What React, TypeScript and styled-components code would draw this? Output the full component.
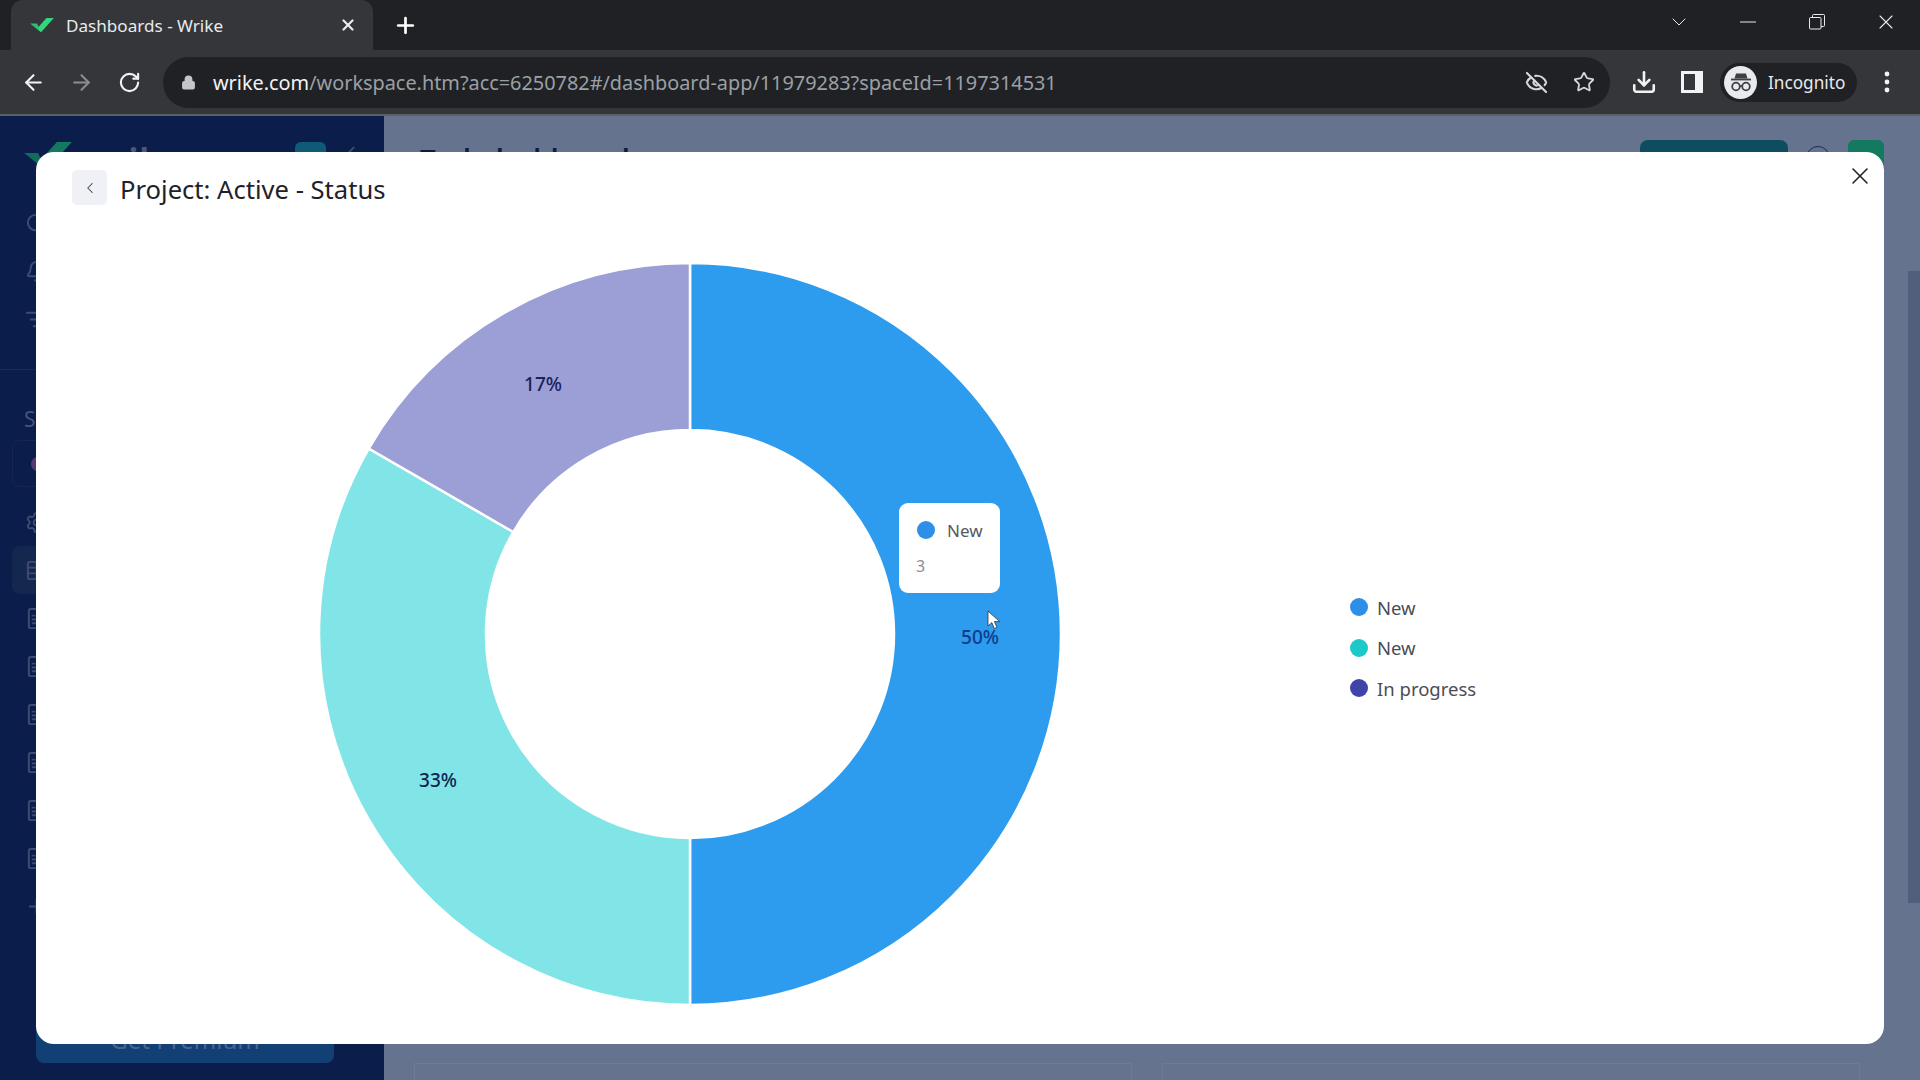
import styled, { createGlobalStyle } from "styled-components";
import {
  ArrowLeft,
  ArrowRight,
  Bell,
  ChevronDown,
  ChevronLeft,
  Download,
  EyeOff,
  FileText,
  ListFilter,
  Lock,
  Minus,
  Plus,
  RotateCw,
  Search,
  Settings,
  Star,
  Table,
  X,
} from "lucide-react";

const GlobalStyle = createGlobalStyle`
  html, body {
    margin: 0;
    padding: 0;
    width: 1920px;
    height: 1080px;
    overflow: hidden;
    background: #0b1d4b;
    font-family: "Noto Sans", "Open Sans", Arial, sans-serif;
  }
  * { box-sizing: border-box; }
`;

// Browser chrome
const Page = styled.div`
  position: relative;
  width: 1920px;
  height: 1080px;
  display: flex;
  flex-direction: column;
`;

const TabStrip = styled.div`
  height: 50px;
  background: #202124;
  display: flex;
  align-items: flex-end;
  padding-left: 11px;
  color: #fff;
`;

const Tab = styled.div`
  width: 362px;
  height: 50px;
  background: #35363a;
  border-radius: 12px 12px 0 0;
  display: flex;
  align-items: center;
  padding: 0 16px 0 19px;
  font-size: 17.1px;
  color: #e8eaed;
`;

const TabTitle = styled.span`
  margin-left: 12px;
  flex: 1;
`;

const NewTab = styled.div`
  width: 64px;
  height: 50px;
  display: flex;
  align-items: center;
  justify-content: center;
`;

const WindowControls = styled.div`
  margin-left: auto;
  display: flex;
  height: 50px;
`;

const WindowButton = styled.div`
  width: 69px;
  height: 44px;
  display: flex;
  align-items: center;
  justify-content: center;
  color: #e8eaed;
`;

const Toolbar = styled.div`
  height: 66px;
  background: #35363a;
  border-bottom: 2px solid #5c5f64;
  display: flex;
  align-items: center;
  padding-left: 9px;
  color: #e8eaed;
`;

const ToolButton = styled.div<{ $dim?: boolean }>`
  width: 48px;
  height: 48px;
  flex: none;
  display: flex;
  align-items: center;
  justify-content: center;
  color: ${(p) => (p.$dim ? "#8b8d91" : "#f1f3f4")};
`;

const Omnibox = styled.div`
  width: 1447px;
  height: 51px;
  margin: 0 10px;
  background: #202124;
  border-radius: 26px;
  display: flex;
  align-items: center;
  padding: 0 2px 0 18px;
  font-size: 19.87px;
`;

const UrlText = styled.div`
  margin-left: 17px;
  flex: 1;
  color: #9aa0a6;
  white-space: nowrap;
`;

const UrlHost = styled.span`
  color: #f1f3f4;
`;

const OmniIcon = styled.div`
  width: 48px;
  display: flex;
  justify-content: center;
  color: #d5d7da;
`;

const ProfilePill = styled.div`
  width: 137px;
  height: 39px;
  margin-left: 4px;
  background: #202124;
  border-radius: 20px;
  display: flex;
  align-items: center;
  font-size: 17.2px;
  color: #e8eaed;
`;

const Avatar = styled.div`
  width: 33px;
  height: 33px;
  margin-left: 4px;
  border-radius: 50%;
  background: #e8eaed;
  display: flex;
  align-items: center;
  justify-content: center;
`;

const ProfileName = styled.span`
  margin-left: 11px;
`;

const MoreDots = styled(ToolButton)`
  margin-left: 6px;
`;

// App behind the dialog
const Workspace = styled.div`
  flex: 1;
  display: flex;
  min-height: 0;
`;

const Sidebar = styled.aside`
  width: 384px;
  background: #0b1d4b;
  display: flex;
  flex-direction: column;
  padding-top: 24px;
  color: #3f4c72;
`;

const LogoRow = styled.div`
  height: 59px;
  display: flex;
  align-items: flex-start;
  padding: 2px 22px 0 24px;
`;

const Wordmark = styled.div`
  height: 10px;
  margin-left: 8px;
  font-size: 38px;
  line-height: 38px;
  font-weight: 600;
  color: #4d5878;
`;

const WorkspaceBadge = styled.div`
  width: 31px;
  height: 31px;
  margin-left: auto;
  margin-right: 14px;
  border-radius: 6px;
  background: #0e5a78;
`;

const NavRow = styled.div<{ $active?: boolean }>`
  height: 48px;
  margin: 0 12px;
  padding-left: 13px;
  border-radius: 8px;
  background: ${(p) => (p.$active ? "#14274f" : "transparent")};
  display: flex;
  align-items: center;
`;

const Divider = styled.div`
  height: 1px;
  margin-top: 26px;
  background: #1a2a55;
`;

const SpacesLabel = styled.div`
  margin: 37px 0 0 24px;
  height: 24px;
  line-height: 24px;
  font-size: 21px;
  color: #46537a;
`;

const SpaceSelect = styled.div`
  height: 47px;
  margin: 9px 12px 11px;
  padding-left: 13px;
  border: 1px solid #15264f;
  border-radius: 8px;
  display: flex;
  align-items: center;
`;

const SpaceDot = styled.div`
  width: 24px;
  height: 18px;
  border-radius: 50%;
  background: #553a70;
  margin-left: 5px;
`;

const UpgradeButton = styled.div`
  height: 48px;
  margin: auto 50px 17px 36px;
  border-radius: 8px;
  background: #123f74;
  display: flex;
  align-items: center;
  justify-content: center;
  font-size: 24px;
  color: #48658f;
`;

const Main = styled.main`
  flex: 1;
  display: flex;
  background: #65738f;
`;

const MainColumn = styled.div`
  flex: 1;
  display: flex;
  flex-direction: column;
  padding: 24px 24px 0 30px;
`;

const TopBar = styled.div`
  display: flex;
  align-items: flex-start;
  padding-left: 6px;
`;

const Heading = styled.h1`
  margin: 0;
  font-size: 27.5px;
  line-height: 38px;
  font-weight: 600;
  color: #0e1b45;
`;

const ShareButton = styled.div`
  width: 148px;
  height: 40px;
  margin-left: auto;
  border-radius: 8px;
  background: #0e4d5f;
`;

const HelpCircle = styled.div`
  width: 24px;
  height: 24px;
  margin: 6px 0 0 18px;
  border: 1.5px solid #1b2b5a;
  border-radius: 50%;
`;

const UserBadge = styled.div`
  width: 36px;
  height: 40px;
  margin-left: 18px;
  border-radius: 6px;
  background: #137a60;
`;

const CardRow = styled.div`
  margin-top: auto;
  height: 17px;
  display: flex;
  gap: 30px;
`;

const Card = styled.div<{ $width: number }>`
  width: ${(p) => p.$width}px;
  border: 1px solid #6e7b96;
  border-bottom: none;
`;

const ScrollTrack = styled.div`
  width: 12px;
  padding-top: 155px;
`;

const ScrollThumb = styled.div`
  height: 632px;
  background: #525f7c;
`;

// Dialog
const Modal = styled.section`
  position: absolute;
  left: 36px;
  top: 152px;
  width: 1848px;
  height: 892px;
  background: #fff;
  border-radius: 18px;
  display: flex;
  flex-direction: column;
`;

const ModalHeader = styled.header`
  height: 111px;
  flex: none;
  display: flex;
  align-items: flex-start;
  padding: 18px 10px 0 36px;
`;

const BackButton = styled.button`
  width: 35px;
  height: 35px;
  padding: 0;
  border: none;
  border-radius: 5px;
  background: #f0f1f6;
  color: #3a3d46;
  display: flex;
  align-items: center;
  justify-content: center;
`;

const ModalTitle = styled.h2`
  margin: 1px 0 0 13px;
  font-size: 25.6px;
  line-height: 38px;
  font-weight: 400;
  color: #1f2229;
`;

const CloseButton = styled.button`
  width: 28px;
  height: 28px;
  margin: -8px 0 0 auto;
  padding: 0;
  border: none;
  background: none;
  color: #22252c;
`;

const ChartRow = styled.div`
  display: flex;
  align-items: flex-start;
  padding-left: 284px;
`;

const ChartWrap = styled.div`
  position: relative;
  width: 740px;
  height: 742px;
`;

const DonutSvg = styled.svg`
  display: block;
  overflow: visible;
`;

const PercentLabel = styled.text`
  font-size: 19px;
  font-weight: 500;
  text-anchor: middle;
  dominant-baseline: central;
`;

const Tooltip = styled.div`
  position: absolute;
  left: 579px;
  top: 240px;
  width: 101px;
  height: 90px;
  padding: 18px 0 0 17px;
  border-radius: 9px;
  background: #fff;
  font-size: 17px;
  color: #555962;
`;

const TooltipKey = styled.div`
  display: flex;
  align-items: center;
  height: 18px;
  margin-left: 1px;
`;

const TooltipValue = styled.div`
  margin-top: 18px;
  line-height: 18px;
  font-size: 16px;
  color: #8a8d94;
`;

const Dot = styled.span<{ $color: string }>`
  width: 18px;
  height: 18px;
  flex: none;
  border-radius: 50%;
  background: ${(p) => p.$color};
`;

const TooltipName = styled.span`
  margin-left: 12px;
`;

const Pointer = styled.svg`
  position: absolute;
  left: 667px;
  top: 347px;
`;

const Legend = styled.ul`
  list-style: none;
  margin: 324px 0 0 290px;
  padding: 0;
`;

const LegendRow = styled.li`
  height: 40.5px;
  display: flex;
  align-items: center;
  font-size: 18.5px;
  color: #4a4d57;
`;

const LegendName = styled.span`
  margin-left: 9px;
`;

const slices = [
  { share: 3 / 6, color: "#2d9bee", label: "50%", labelColor: "#0f3c8c", x: 660, y: 374 },
  { share: 2 / 6, color: "#81e5e8", label: "33%", labelColor: "#10244f", x: 118, y: 517 },
  { share: 1 / 6, color: "#9c9fd6", label: "17%", labelColor: "#1a2060", x: 223, y: 121 },
];

const legendItems = [
  { name: "New", color: "#2d8fe8" },
  { name: "New", color: "#1cc8c8" },
  { name: "In progress", color: "#3f45a8" },
];

function polar(radius: number, turn: number) {
  const angle = turn * 2 * Math.PI;
  return [370 + radius * Math.sin(angle), 371 - radius * Math.cos(angle)];
}

function slicePath(start: number, end: number) {
  const outer = 371;
  const inner = 204;
  const [x1, y1] = polar(outer, start);
  const [x2, y2] = polar(outer, end);
  const [x3, y3] = polar(inner, end);
  const [x4, y4] = polar(inner, start);
  const large = end - start > 0.5 ? 1 : 0;
  return `M${x1} ${y1}A${outer} ${outer} 0 ${large} 1 ${x2} ${y2}L${x3} ${y3}A${inner} ${inner} 0 ${large} 0 ${x4} ${y4}Z`;
}

function Donut() {
  let turn = 0;
  return (
    <DonutSvg width="740" height="742" viewBox="0 0 740 742">
      {slices.map((slice) => {
        const start = turn;
        turn += slice.share;
        return (
          <path
            key={slice.label}
            d={slicePath(start, turn)}
            fill={slice.color}
            stroke="#fff"
            strokeWidth="2.5"
          />
        );
      })}
      {slices.map((slice) => (
        <PercentLabel key={slice.label} x={slice.x} y={slice.y} fill={slice.labelColor}>
          {slice.label}
        </PercentLabel>
      ))}
    </DonutSvg>
  );
}

function WrikeMark({ width, color }: { width: number; color: string }) {
  return (
    <svg width={width} height={width * 0.62} viewBox="0 0 48 30" style={{ flex: "none" }}>
      <path d="M33 0H48L22 29 15 20Z" fill={color} />
      <path d="M0 11H14L22 29Z" fill={color} opacity="0.85" />
    </svg>
  );
}

function IncognitoIcon() {
  return (
    <svg width="26" height="26" viewBox="0 0 26 26" fill="none">
      <path d="M8 4.5h10l1.5 5h-13z" fill="#3c4043" />
      <path d="M3 10.5h20" stroke="#3c4043" strokeWidth="1.8" />
      <circle cx="8" cy="17.5" r="3.8" stroke="#3c4043" strokeWidth="1.8" />
      <circle cx="18" cy="17.5" r="3.8" stroke="#3c4043" strokeWidth="1.8" />
      <path d="M11.8 17h2.4" stroke="#3c4043" strokeWidth="1.6" />
    </svg>
  );
}

function SidePanelIcon() {
  return (
    <svg width="22" height="22" viewBox="0 0 22 22">
      <path d="M0 0H22V22H0Z M3 3V19H14V3Z" fill="#f1f3f4" fillRule="evenodd" />
    </svg>
  );
}

function RestoreIcon() {
  return (
    <svg width="16" height="16" viewBox="0 0 16 16" fill="none" stroke="#e8eaed" strokeWidth="1">
      <rect x="0.5" y="3.5" width="11.5" height="11.5" rx="1" />
      <path d="M3.5 3.5V1.5a1 1 0 0 1 1-1h10a1 1 0 0 1 1 1v10a1 1 0 0 1-1 1h-2.5" />
    </svg>
  );
}

function DotsIcon() {
  return (
    <svg width="6" height="22" viewBox="0 0 6 22" fill="#f1f3f4">
      <circle cx="3" cy="3" r="2.4" />
      <circle cx="3" cy="11" r="2.4" />
      <circle cx="3" cy="19" r="2.4" />
    </svg>
  );
}

export default function App() {
  const docRows = [0, 1, 2, 3, 4, 5];

  return (
    <Page>
      <GlobalStyle />
      <TabStrip>
        <Tab>
          <WrikeMark width={24} color="#2fd67c" />
          <TabTitle>Dashboards - Wrike</TabTitle>
          <X size={18} strokeWidth={3} />
        </Tab>
        <NewTab>
          <Plus size={25} strokeWidth={2.6} />
        </NewTab>
        <WindowControls>
          <WindowButton>
            <ChevronDown size={24} strokeWidth={1} />
          </WindowButton>
          <WindowButton>
            <Minus size={26} strokeWidth={1} />
          </WindowButton>
          <WindowButton>
            <RestoreIcon />
          </WindowButton>
          <WindowButton>
            <X size={24} strokeWidth={1.1} />
          </WindowButton>
        </WindowControls>
      </TabStrip>

      <Toolbar>
        <ToolButton>
          <ArrowLeft size={25} strokeWidth={2} />
        </ToolButton>
        <ToolButton $dim>
          <ArrowRight size={25} strokeWidth={2} />
        </ToolButton>
        <ToolButton>
          <RotateCw size={23} strokeWidth={2.2} />
        </ToolButton>
        <Omnibox>
          <Lock size={15} strokeWidth={2.5} color="#c4c6c9" fill="#c4c6c9" />
          <UrlText>
            <UrlHost>wrike.com</UrlHost>/workspace.htm?acc=6250782#/dashboard-app/11979283?spaceId=1197314531
          </UrlText>
          <OmniIcon>
            <EyeOff size={23} strokeWidth={2.2} />
          </OmniIcon>
          <OmniIcon>
            <Star size={22} strokeWidth={2} />
          </OmniIcon>
        </Omnibox>
        <ToolButton>
          <Download size={26} strokeWidth={2.4} />
        </ToolButton>
        <ToolButton>
          <SidePanelIcon />
        </ToolButton>
        <ProfilePill>
          <Avatar>
            <IncognitoIcon />
          </Avatar>
          <ProfileName>Incognito</ProfileName>
        </ProfilePill>
        <MoreDots>
          <DotsIcon />
        </MoreDots>
      </Toolbar>

      <Workspace>
        <Sidebar>
          <LogoRow>
            <WrikeMark width={48} color="#147a5f" />
            <Wordmark>wrike</Wordmark>
            <WorkspaceBadge />
            <ChevronLeft size={22} />
          </LogoRow>
          <NavRow>
            <Search size={23} />
          </NavRow>
          <NavRow>
            <Bell size={23} />
          </NavRow>
          <NavRow>
            <ListFilter size={23} />
          </NavRow>
          <Divider />
          <SpacesLabel>Spaces</SpacesLabel>
          <SpaceSelect>
            <SpaceDot />
          </SpaceSelect>
          <NavRow>
            <Settings size={23} />
          </NavRow>
          <NavRow $active>
            <Table size={23} />
          </NavRow>
          {docRows.map((row) => (
            <NavRow key={row}>
              <FileText size={23} />
            </NavRow>
          ))}
          <NavRow>
            <Plus size={23} />
          </NavRow>
          <UpgradeButton>Get Premium</UpgradeButton>
        </Sidebar>

        <Main>
          <MainColumn>
            <TopBar>
              <Heading>Task dashboard</Heading>
              <ShareButton />
              <HelpCircle />
              <UserBadge />
            </TopBar>
            <CardRow>
              <Card $width={718} />
              <Card $width={698} />
            </CardRow>
          </MainColumn>
          <ScrollTrack>
            <ScrollThumb />
          </ScrollTrack>
        </Main>
      </Workspace>

      <Modal>
        <ModalHeader>
          <BackButton>
            <ChevronLeft size={18} strokeWidth={1.4} />
          </BackButton>
          <ModalTitle>Project: Active - Status</ModalTitle>
          <CloseButton>
            <X size={28} strokeWidth={1.3} />
          </CloseButton>
        </ModalHeader>
        <ChartRow>
          <ChartWrap>
            <Donut />
            <Tooltip>
              <TooltipKey>
                <Dot $color="#2d8fe8" />
                <TooltipName>New</TooltipName>
              </TooltipKey>
              <TooltipValue>3</TooltipValue>
            </Tooltip>
            <Pointer width="14" height="20" viewBox="0 0 14 20">
              <path d="M1 1V16L4.8 12.6 7.4 18.6 10 17.4 7.4 11.6H12.6Z" fill="#fff" stroke="#333" strokeWidth="0.8" />
            </Pointer>
          </ChartWrap>
          <Legend>
            {legendItems.map((item, index) => (
              <LegendRow key={index}>
                <Dot $color={item.color} />
                <LegendName>{item.name}</LegendName>
              </LegendRow>
            ))}
          </Legend>
        </ChartRow>
      </Modal>
    </Page>
  );
}
